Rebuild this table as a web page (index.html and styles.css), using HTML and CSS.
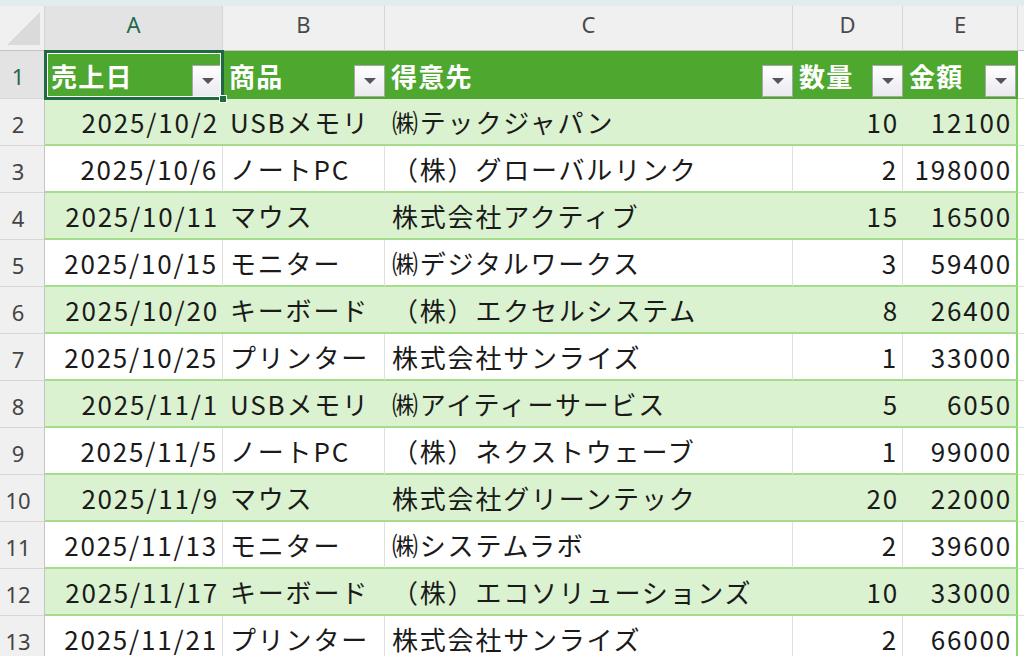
FILE: index.html
```html
<!DOCTYPE html>
<html lang="ja">
<head>
<meta charset="utf-8">
<title>Sheet</title>
<link rel="stylesheet" href="styles.css">
</head>
<body>
<div class="sheet">
  <div class="topstrip"></div>
  <div class="grid">
    <div class="row hdr">
      <div class="corner"><span class="tri"></span></div>
      <div class="ch sel">A</div>
      <div class="ch">B</div>
      <div class="ch">C</div>
      <div class="ch">D</div>
      <div class="ch">E</div>
      <div class="ch x"></div>
    </div>
    <div class="row thr">
      <div class="rh sel">1</div>
      <div class="th active"><span>売上日</span><span class="dd"></span><span class="handle"></span></div>
      <div class="th"><span>商品</span><span class="dd"></span></div>
      <div class="th"><span>得意先</span><span class="dd"></span></div>
      <div class="th"><span>数量</span><span class="dd"></span></div>
      <div class="th last"><span>金額</span><span class="dd"></span></div>
      <div class="c x"></div>
    </div>
    <div class="row g">
      <div class="rh">2</div>
      <div class="c num">2025/10/2</div><div class="c">USBメモリ</div><div class="c">㈱テックジャパン</div><div class="c num">10</div><div class="c num last">12100</div><div class="c x"></div>
    </div>
    <div class="row w">
      <div class="rh">3</div>
      <div class="c num">2025/10/6</div><div class="c">ノートPC</div><div class="c">（株）グローバルリンク</div><div class="c num">2</div><div class="c num last">198000</div><div class="c x"></div>
    </div>
    <div class="row g">
      <div class="rh">4</div>
      <div class="c num">2025/10/11</div><div class="c">マウス</div><div class="c">株式会社アクティブ</div><div class="c num">15</div><div class="c num last">16500</div><div class="c x"></div>
    </div>
    <div class="row w">
      <div class="rh">5</div>
      <div class="c num">2025/10/15</div><div class="c">モニター</div><div class="c">㈱デジタルワークス</div><div class="c num">3</div><div class="c num last">59400</div><div class="c x"></div>
    </div>
    <div class="row g">
      <div class="rh">6</div>
      <div class="c num">2025/10/20</div><div class="c">キーボード</div><div class="c">（株）エクセルシステム</div><div class="c num">8</div><div class="c num last">26400</div><div class="c x"></div>
    </div>
    <div class="row w">
      <div class="rh">7</div>
      <div class="c num">2025/10/25</div><div class="c">プリンター</div><div class="c">株式会社サンライズ</div><div class="c num">1</div><div class="c num last">33000</div><div class="c x"></div>
    </div>
    <div class="row g">
      <div class="rh">8</div>
      <div class="c num">2025/11/1</div><div class="c">USBメモリ</div><div class="c">㈱アイティーサービス</div><div class="c num">5</div><div class="c num last">6050</div><div class="c x"></div>
    </div>
    <div class="row w">
      <div class="rh">9</div>
      <div class="c num">2025/11/5</div><div class="c">ノートPC</div><div class="c">（株）ネクストウェーブ</div><div class="c num">1</div><div class="c num last">99000</div><div class="c x"></div>
    </div>
    <div class="row g">
      <div class="rh">10</div>
      <div class="c num">2025/11/9</div><div class="c">マウス</div><div class="c">株式会社グリーンテック</div><div class="c num">20</div><div class="c num last">22000</div><div class="c x"></div>
    </div>
    <div class="row w">
      <div class="rh">11</div>
      <div class="c num">2025/11/13</div><div class="c">モニター</div><div class="c">㈱システムラボ</div><div class="c num">2</div><div class="c num last">39600</div><div class="c x"></div>
    </div>
    <div class="row g">
      <div class="rh">12</div>
      <div class="c num">2025/11/17</div><div class="c">キーボード</div><div class="c">（株）エコソリューションズ</div><div class="c num">10</div><div class="c num last">33000</div><div class="c x"></div>
    </div>
    <div class="row w">
      <div class="rh">13</div>
      <div class="c num">2025/11/21</div><div class="c">プリンター</div><div class="c">株式会社サンライズ</div><div class="c num">2</div><div class="c num last">66000</div><div class="c x"></div>
    </div>
  </div>
</div>
</body>
</html>
```

FILE: styles.css
```css
* { box-sizing: border-box; }
html, body { margin: 0; padding: 0; }
body {
  width: 1024px;
  height: 656px;
  overflow: hidden;
  background: #ffffff;
  font-family: "Noto Sans CJK JP", "Noto Sans", sans-serif;
}
.sheet { width: 1024px; height: 656px; overflow: hidden; }
.topstrip { height: 6px; background: #e2ecec; }
.grid {
  display: grid;
  grid-template-columns: 45px 178px 162px 408px 110px 115px 6px;
  grid-template-rows: 45px 48px repeat(12, 47px);
}
.row { display: contents; }

/* column headers */
.corner {
  background: #f0f0f0;
  border-right: 1px solid #d4d4d4;
  border-bottom: 1px solid #c4c4c4;
  position: relative;
}
.tri {
  position: absolute;
  right: 4px;
  bottom: 5px;
  width: 0;
  height: 0;
  border-left: 33px solid transparent;
  border-bottom: 33px solid #dadada;
}
.ch {
  background: #f0f0f0;
  border-right: 1px solid #d6d6d6;
  border-bottom: 1px solid #c4c4c4;
  color: #4a4a4a;
  font-family: "Noto Sans", "Noto Sans CJK JP", sans-serif;
  font-size: 22px;
  line-height: 26px;
  text-align: center;
  padding-top: 5px;
}
.ch.sel { background: #e3e3e3; color: #1f6a4a; }
.ch.x { border-right: none; }

/* row headers */
.rh {
  background: #f0f0f0;
  border-right: 1px solid #c4c4c4;
  border-bottom: 1px solid #d6d6d6;
  color: #444;
  font-family: "Noto Sans", "Noto Sans CJK JP", sans-serif;
  font-size: 22px;
  display: flex;
  align-items: center;
  justify-content: center;
  padding-right: 8px;
  padding-top: 3px;
}
.rh.sel { background: #e3e3e3; color: #1f6a4a; }

/* table header row */
.th {
  background: #4ea72e;
  color: #ffffff;
  font-weight: bold;
  font-size: 26px;
  letter-spacing: 1.2px;
  display: flex;
  justify-content: space-between;
  align-items: center;
  padding-left: 6px;
  position: relative;
}
.th.last { border-right: 2px solid #4ea72e; }
.dd {
  align-self: flex-end;
  margin-bottom: 2px;
  width: 31px;
  height: 32px;
  border: 1px solid #a8a8a8;
  background: linear-gradient(#ffffff, #e9e9ef);
  display: flex;
  align-items: center;
  justify-content: center;
}
.dd::after {
  content: "";
  width: 0;
  height: 0;
  border-left: 6px solid transparent;
  border-right: 6px solid transparent;
  border-top: 6px solid #555;
}
.th.active::before {
  content: "";
  position: absolute;
  left: -1px;
  top: -1px;
  right: -1px;
  bottom: -1px;
  border: 3px solid #1f6b3f;
  box-shadow: inset 0 0 0 1px #ffffff;
  pointer-events: none;
  z-index: 2;
}
.handle {
  position: absolute;
  right: -4px;
  bottom: -4px;
  width: 8px;
  height: 8px;
  background: #1f6b3f;
  border: 1px solid #ffffff;
  z-index: 3;
}

/* data cells */
.c {
  font-size: 26px;
  letter-spacing: 1.8px;
  color: #1a1a1a;
  white-space: nowrap;
  overflow: hidden;
  display: flex;
  align-items: center;
  padding: 0 4px 0 7px;
  border-bottom: 2px solid #a4de8c;
}
.c.num { justify-content: flex-end; }
.g .c { background: #daf2d0; }
.w .c { background: #ffffff; border-right: 1px solid #e0e0e0; }
.c.last { border-right: 2px solid #8fd672 !important; }
.c.x { background: #ffffff !important; border-bottom: 1px solid #e0e0e0; border-right: none; padding: 0; }
.thr .c.x { border-bottom: 1px solid #e0e0e0; }
```
